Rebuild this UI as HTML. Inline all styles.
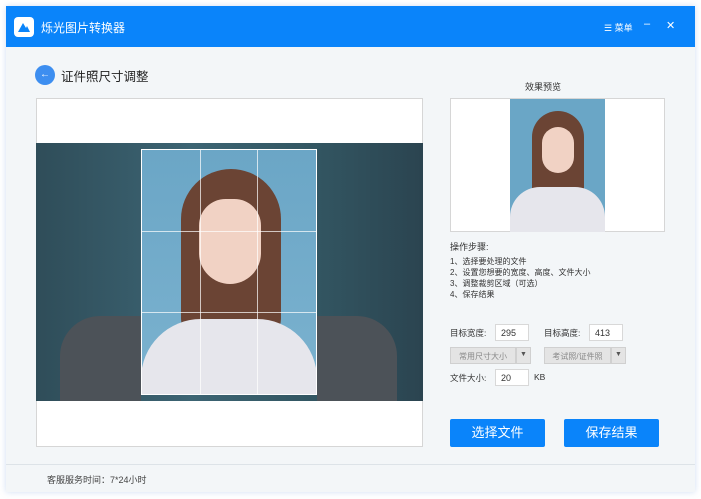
<!DOCTYPE html>
<html><head><meta charset="utf-8"><style>
*{margin:0;padding:0;box-sizing:border-box}
body{width:701px;height:499px;background:#fff;font-family:"Liberation Sans","Noto Sans CJK SC",sans-serif;position:relative;overflow:hidden}
.a{position:absolute}
.win{left:6px;top:6px;width:689px;height:486px;background:#f3f6f8;box-shadow:0 0 6px rgba(120,160,220,.35)}
.title{left:6px;top:6px;width:689px;height:41px;background:#0a84fa;color:#fff}
.t{font-size:11px;color:#333}
.inp{background:#fff;border:1px solid #d8d8d8;font-size:9px;color:#333;padding:3px 0 0 5px;height:17px}
.sel{background:#e4e4e4;border:1px solid #d0d0d0;font-size:8px;color:#888;height:17px;padding-top:3px;text-align:center;white-space:nowrap;overflow:hidden}
.btn{background:#0a84fa;color:#fff;font-size:13px;text-align:center;line-height:28px;border-radius:2px;width:95px;height:28px}
</style></head><body>
<div class="a win"></div>
<div class="a title">
 <div class="a" style="left:8px;top:11px;width:20px;height:20px;background:#fff;border-radius:4px"></div>
 <svg class="a" style="left:10px;top:14px" width="16" height="14"><path d="M2 12 L7 3 L10 8 L8 12Z M8 12 L11 6 L14 12Z" fill="#0a84fa"/></svg>
 <div class="a" style="left:35px;top:13px;font-size:12px">烁光图片转换器</div>
 <div class="a" style="left:598px;top:15px;font-size:9px">☰ 菜单</div>
 <div class="a" style="left:638px;top:12px;font-size:11px">–</div>
 <div class="a" style="left:660px;top:13px;font-size:11px">✕</div>
</div>
<div class="a" style="left:35px;top:65px;width:20px;height:20px;border-radius:50%;background:#3d8ef0;color:#fff;font-size:10px;text-align:center;line-height:20px">←</div>
<div class="a" style="left:61px;top:66px;font-size:12.5px;color:#222">证件照尺寸调整</div>
<div class="a" style="left:36px;top:98px;width:387px;height:349px;background:#fff;border:1px solid #d6d6d6"></div>
<div class="a" style="left:36px;top:143px;width:387px;height:258px;background:linear-gradient(90deg,#2f4d59,#3c6473 40%,#335763 70%,#2b4450)"></div>
<div class="a" style="left:60px;top:316px;width:81px;height:85px;background:#4c5258;border-radius:40px 0 0 0"></div>
<div class="a" style="left:317px;top:316px;width:80px;height:85px;background:#4c5258;border-radius:0 40px 0 0"></div>
<div class="a" style="left:141px;top:149px;width:176px;height:246px;background:linear-gradient(#6ba6c6,#7bb2cf);overflow:hidden">
 <div class="a" style="left:40px;top:20px;width:100px;height:170px;background:#6b4434;border-radius:50px 50px 20px 20px"></div>
 <div class="a" style="left:58px;top:50px;width:62px;height:85px;background:#f1d2c4;border-radius:30px 30px 35px 35px"></div>
 <div class="a" style="left:0;top:170px;width:176px;height:80px;background:#e6e6ec;border-radius:60px 60px 0 0"></div>
</div>
<div class="a" style="left:141px;top:149px;width:176px;height:246px;border:1px solid #fff">
 <div class="a" style="left:58px;top:0;width:58px;height:244px;border-left:1px solid rgba(255,255,255,.7);border-right:1px solid rgba(255,255,255,.7)"></div>
 <div class="a" style="left:0;top:81px;width:174px;height:82px;border-top:1px solid rgba(255,255,255,.7);border-bottom:1px solid rgba(255,255,255,.7)"></div>
</div>
<div class="a t" style="left:525px;top:80px;font-size:9px">效果预览</div>
<div class="a" style="left:450px;top:98px;width:215px;height:134px;background:#fff;border:1px solid #d6d6d6"></div>
<div class="a" style="left:510px;top:99px;width:95px;height:133px;background:#6aa6c6;overflow:hidden">
 <div class="a" style="left:22px;top:12px;width:52px;height:90px;background:#6b4434;border-radius:26px 26px 10px 10px"></div>
 <div class="a" style="left:32px;top:28px;width:32px;height:46px;background:#f1d2c4;border-radius:16px"></div>
 <div class="a" style="left:0;top:88px;width:95px;height:50px;background:#e6e6ec;border-radius:30px 30px 0 0"></div>
</div>
<div class="a t" style="left:450px;top:241px;font-size:9px;line-height:12px">操作步骤:</div>
<div class="a t" style="left:450px;top:256px;font-size:8px;line-height:11px">1、选择要处理的文件<br>2、设置您想要的宽度、高度、文件大小<br>3、调整裁剪区域（可选）<br>4、保存结果</div>
<div class="a t" style="left:450px;top:327px;font-size:8.5px">目标宽度:</div>
<div class="a inp" style="left:495px;top:324px;width:34px">295</div>
<div class="a t" style="left:544px;top:327px;font-size:8.5px">目标高度:</div>
<div class="a inp" style="left:589px;top:324px;width:34px">413</div>
<div class="a sel" style="left:450px;top:347px;width:66px">常用尺寸大小</div>
<div class="a sel" style="left:516px;top:347px;width:15px;color:#555;font-size:7px">▼</div>
<div class="a sel" style="left:544px;top:347px;width:67px">考试照/证件照</div>
<div class="a sel" style="left:611px;top:347px;width:15px;color:#555;font-size:7px">▼</div>
<div class="a t" style="left:450px;top:372px;font-size:8.5px">文件大小:</div>
<div class="a inp" style="left:495px;top:369px;width:34px">20</div>
<div class="a t" style="left:534px;top:372px;font-size:8.5px">KB</div>
<div class="a btn" style="left:450px;top:419px">选择文件</div>
<div class="a btn" style="left:564px;top:419px">保存结果</div>
<div class="a" style="left:6px;top:464px;width:689px;height:1px;background:#dde3e8"></div>
<div class="a t" style="left:47px;top:473px;font-size:9px;color:#444">客服服务时间：7*24小时</div>
</body></html>
